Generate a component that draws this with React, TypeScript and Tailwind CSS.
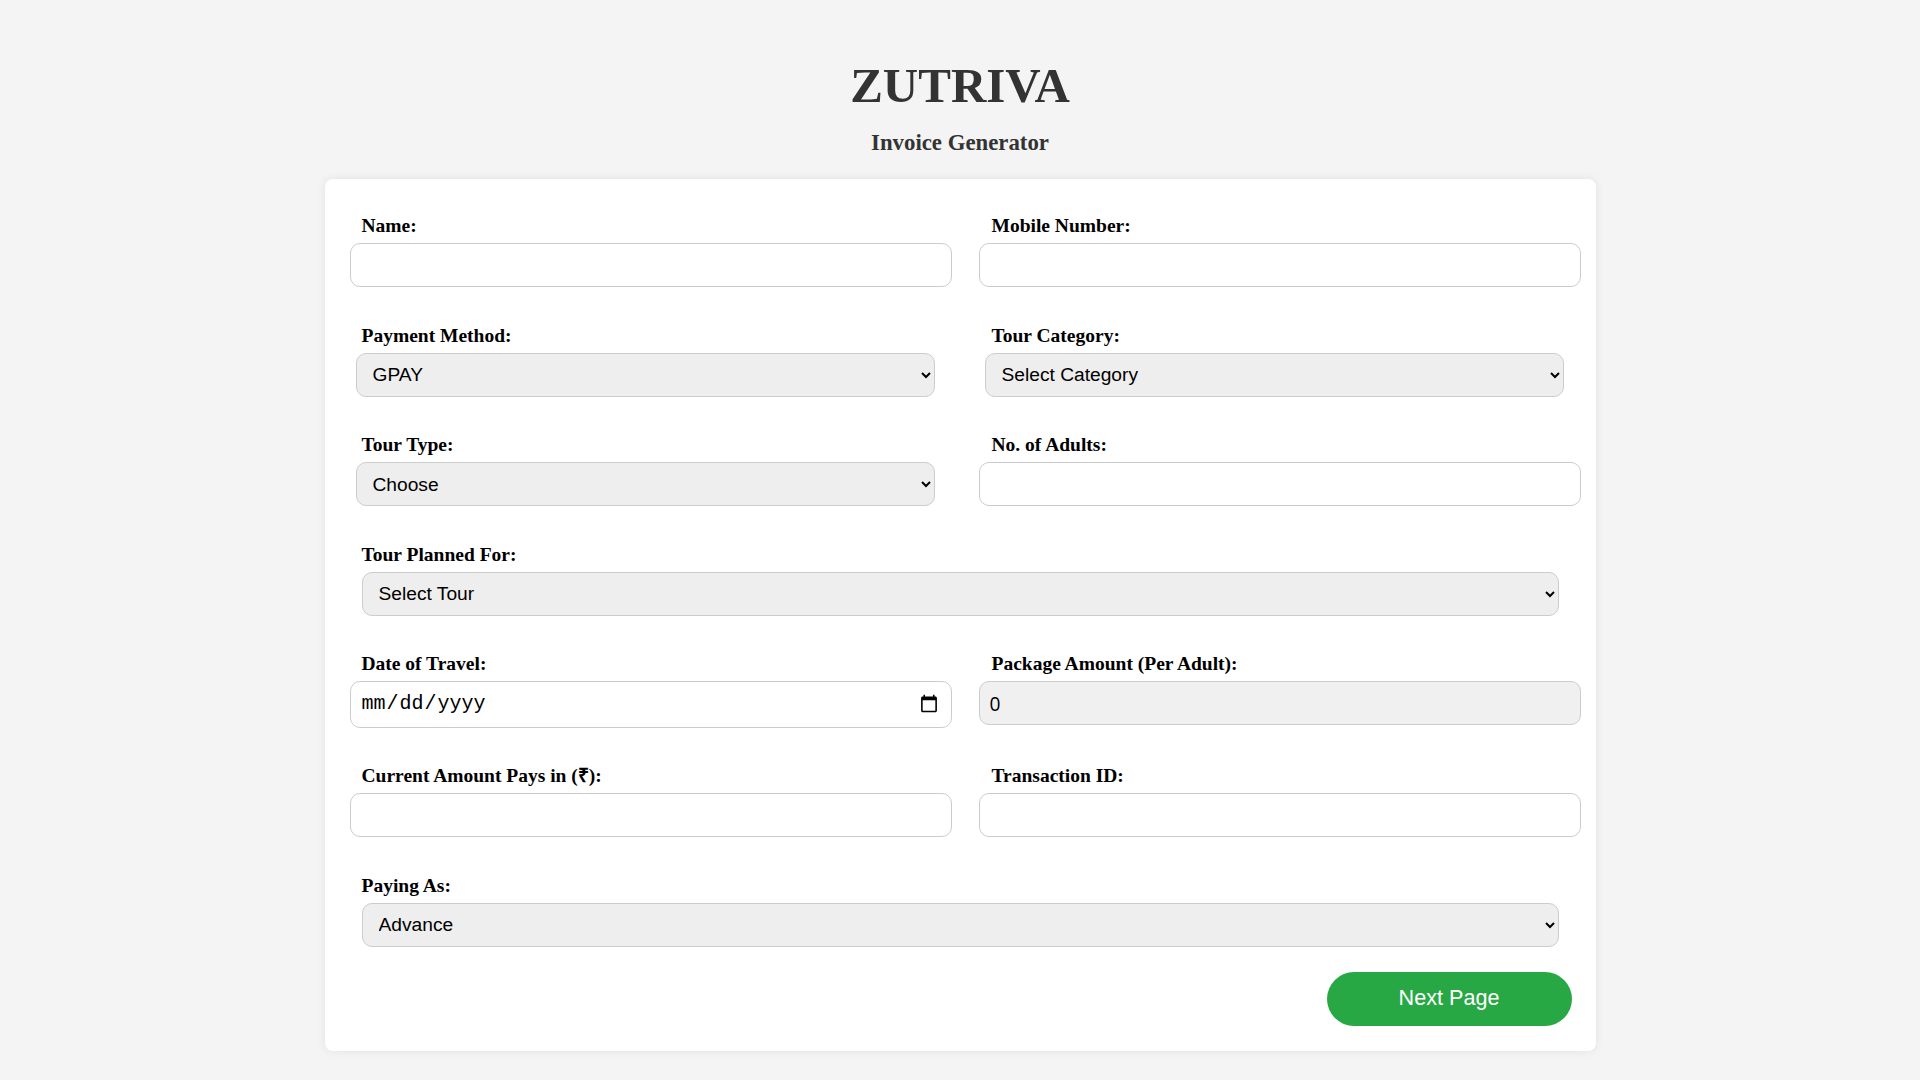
import { useState } from 'react';

// Field label shared by all controls
const Label = ({ text, className = '' }: { text: string; className?: string }) => (
    <label className={`block h-[22px] leading-[22px] text-[19.5px] font-bold text-black mb-[6px] ${className}`}>
        {text}
    </label>
);

const inputCls =
    "block w-full h-[44px] rounded-[10px] border border-[#cccccc] px-[10px] text-[19.2px] outline-none";
const selectCls =
    "block h-[44px] rounded-[10px] border border-[#cccccc] bg-[#eeeeee] pl-[12px] pr-[8px] text-[19.2px] text-black outline-none font-['Liberation_Sans',sans-serif]";

const App = () => {
    const [form, setForm] = useState({
        name: '',
        mobile: '',
        payment: 'GPAY',
        category: '',
        tourType: '',
        adults: '',
        tour: '',
        date: '',
        current: '',
        txn: '',
        payingAs: 'Advance',
    });

    const update = (key: string) => (e: React.ChangeEvent<HTMLInputElement | HTMLSelectElement>) =>
        setForm({ ...form, [key]: e.target.value });

    return (
        <div className="min-h-screen bg-[#f4f4f4] pt-[58px] pb-[30px] font-['Liberation_Serif',serif]">
            <h1 className="text-center text-[49px] leading-[56px] font-bold text-[#333333]">ZUTRIVA</h1>
            <h2 className="mt-[15px] text-center text-[22.8px] leading-[28px] font-bold text-[#333333]">Invoice Generator</h2>

            <div className="mx-auto mt-[22px] w-[1271px] rounded-[8px] bg-white pt-[36px] pl-[25px] pr-[15px] pb-[25px] shadow-[0_0_10px_rgba(0,0,0,0.08)]">
                <div className="grid grid-cols-[602px_602px] gap-x-[27px] gap-y-[37.5px] items-start">
                    <div>
                        <Label text="Name:" className="ml-[12px]" />
                        <input className={`${inputCls} bg-white`} value={form.name} onChange={update('name')} />
                    </div>
                    <div>
                        <Label text="Mobile Number:" className="ml-[13px]" />
                        <input className={`${inputCls} bg-white`} value={form.mobile} onChange={update('mobile')} />
                    </div>

                    <div>
                        <Label text="Payment Method:" className="ml-[12px]" />
                        <select className={`${selectCls} ml-[6px] w-[579px]`} value={form.payment} onChange={update('payment')}>
                            <option value="GPAY">GPAY</option>
                            <option value="Cash">Cash</option>
                            <option value="Bank Transfer">Bank Transfer</option>
                        </select>
                    </div>
                    <div>
                        <Label text="Tour Category:" className="ml-[13px]" />
                        <select className={`${selectCls} ml-[6px] w-[579px]`} value={form.category} onChange={update('category')}>
                            <option value="">Select Category</option>
                            <option value="Domestic">Domestic</option>
                            <option value="International">International</option>
                        </select>
                    </div>

                    <div>
                        <Label text="Tour Type:" className="ml-[12px]" />
                        <select className={`${selectCls} ml-[6px] w-[579px]`} value={form.tourType} onChange={update('tourType')}>
                            <option value="">Choose</option>
                            <option value="Group">Group</option>
                            <option value="Private">Private</option>
                        </select>
                    </div>
                    <div>
                        <Label text="No. of Adults:" className="ml-[13px]" />
                        <input className={`${inputCls} h-[43px] bg-white`} value={form.adults} onChange={update('adults')} />
                    </div>

                    <div className="col-span-2">
                        <Label text="Tour Planned For:" className="ml-[12px]" />
                        <select className={`${selectCls} ml-[12px] w-[1197px]`} value={form.tour} onChange={update('tour')}>
                            <option value="">Select Tour</option>
                        </select>
                    </div>

                    <div>
                        <Label text="Date of Travel:" className="ml-[12px]" />
                        <input
                            type="date"
                            className={`${inputCls} h-[46.5px] bg-white font-['Liberation_Mono',monospace] text-[20px]`}
                            value={form.date}
                            onChange={update('date')}
                        />
                    </div>
                    <div>
                        <Label text="Package Amount (Per Adult):" className="ml-[13px]" />
                        <input
                            readOnly
                            className={`${inputCls} h-[43px] bg-[#f0f0f0] font-['Open_Sans',sans-serif] text-[18px]`}
                            value="0"
                        />
                    </div>

                    <div>
                        <Label text="Current Amount Pays in (₹):" className="ml-[12px]" />
                        <input className={`${inputCls} bg-white`} value={form.current} onChange={update('current')} />
                    </div>
                    <div>
                        <Label text="Transaction ID:" className="ml-[13px]" />
                        <input className={`${inputCls} bg-white`} value={form.txn} onChange={update('txn')} />
                    </div>

                    <div className="col-span-2">
                        <Label text="Paying As:" className="ml-[12px]" />
                        <select className={`${selectCls} ml-[12px] w-[1197px]`} value={form.payingAs} onChange={update('payingAs')}>
                            <option value="Advance">Advance</option>
                            <option value="Full Payment">Full Payment</option>
                        </select>
                    </div>
                </div>

                <div className="mt-[25px] flex justify-end">
                    <button className="mr-[9px] h-[54px] w-[245px] rounded-full bg-[#28a745] text-[21.6px] text-white font-['Liberation_Sans',sans-serif]">
                        Next Page
                    </button>
                </div>
            </div>
        </div>
    );
};

export default App;
